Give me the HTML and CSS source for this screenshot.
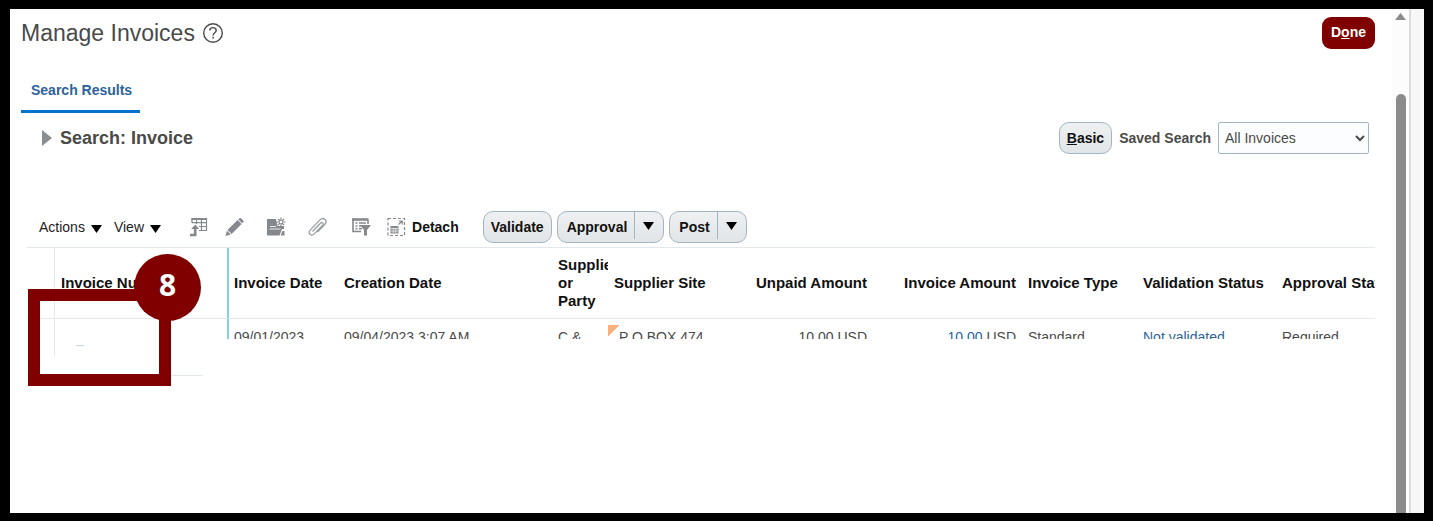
FILE: index.html
```html
<!DOCTYPE html>
<html lang="en">
<head>
<meta charset="UTF-8">
<meta name="viewport" content="width=device-width, initial-scale=1.0">
<title>Manage Invoices</title>
<link rel="stylesheet" href="styles.css">
</head>
<body>
<div class="frame">
    <main class="page">
        <header class="page-header">
            <h1>Manage Invoices</h1>
            <button type="button" class="help" aria-label="Help">
                <svg width="22" height="22" viewBox="0 0 22 22" fill="none" stroke="#4a4a4a">
                    <circle cx="11" cy="11" r="9.3" stroke-width="1.4"/>
                    <path d="M7.8 8.6c0-1.9 1.4-3 3.2-3s3.2 1.1 3.2 2.8c0 2.4-3.1 2.3-3.1 5" stroke-width="1.4"/>
                    <path d="M11.1 14.8v1.7" stroke-width="1.6"/>
                </svg>
            </button>
            <button type="button" class="done">D<u>o</u>ne</button>
        </header>

        <nav class="tabs">
            <a href="#results" class="tab">Search Results</a>
        </nav>

        <section class="search">
            <button type="button" class="expand" aria-label="Expand search">
                <svg width="10" height="16" viewBox="0 0 10 16"><path d="M0 0l10 8-10 8z" fill="#8b8f93"/></svg>
            </button>
            <h2>Search: Invoice</h2>
            <button type="button" class="btn basic"><u>B</u>asic</button>
            <label for="savedSearch">Saved Search</label>
            <select id="savedSearch" name="savedSearch">
                <option>All Invoices</option>
            </select>
        </section>

        <section class="results" id="results">
            <div class="toolbar">
                <button type="button" class="menu">Actions
                    <svg width="11" height="8" viewBox="0 0 11 8"><path d="M0 0h11L5.5 8z"/></svg>
                </button>
                <button type="button" class="menu">View
                    <svg width="11" height="8" viewBox="0 0 11 8"><path d="M0 0h11L5.5 8z"/></svg>
                </button>
                <div class="tools">
                    <button type="button" aria-label="Export">
                        <svg width="19" height="20" viewBox="0 0 19 20" fill="none" stroke="#85898d">
                            <path d="M3 6V1.5h14.5v12H10" stroke-width="1.2"/>
                            <path d="M2.5 2h15.5" stroke-width="2"/>
                            <path d="M7.5 2v5M12.5 2v11.5M3 5.7h14.5M10 9.5h7.5" stroke-width="1.2"/>
                            <path d="M1 18h5.2V11" stroke-width="2.6"/>
                            <path d="M2.2 12L6.2 7.5l4 4.5z" fill="#85898d" stroke="none"/>
                        </svg>
                    </button>
                    <button type="button" aria-label="Edit">
                        <svg width="19" height="20" viewBox="0 0 19 20" fill="#85898d">
                            <path d="M.5 19l1.4-5.3 3.9 3.9z"/>
                            <path d="M2.5 12.9L12.6 3l4 4-10 10z"/>
                            <path d="M13.3 2.4l1-1c.6-.6 1.3-.5 1.9 0l2 2c.6.6.6 1.3 0 1.9l-1 1z"/>
                        </svg>
                    </button>
                    <button type="button" aria-label="Create">
                        <svg width="19" height="20" viewBox="0 0 19 20" fill="#85898d">
                            <path d="M0 2h9l1.500 7H17v3h-2l-2.500 6.500H0z"/>
                            <path d="M13.500 18.500l2-4.500h2v4.500z"/>
                            <path d="M3 9.500h6M2.500 12h11" stroke="#fff" stroke-width=".8"/>
                            <path d="M14 .5v9M9.500 5h9M11 2l6 6M17 2l-6 6" stroke="#85898d" stroke-width="1.200"/>
                            <circle cx="14" cy="5" r="1.200" fill="#fff"/>
                        </svg>
                    </button>
                    <button type="button" aria-label="Attachments">
                        <svg width="19" height="20" viewBox="0 0 19 20" fill="none" stroke="#9a9da0" stroke-width="1.3">
                            <path d="M4.500 14.500l8-8.200c1.700-1.700 3.800.3 2.200 2l-8.400 8.600c-3 2.900-7-.7-4.200-3.800L12 2.900c3.600-3.500 8.200.8 4.900 4.500L9.500 15"/>
                        </svg>
                    </button>
                    <button type="button" aria-label="Query by example">
                        <svg width="19" height="20" viewBox="0 0 19 20" fill="none" stroke="#85898d">
                            <path d="M0 2.500h16.500" stroke-width="2.600"/>
                            <path d="M1 3v11.500h8M16 3v4" stroke-width="1.600"/>
                            <path d="M3.500 6h2M7 6h7M3.500 9h2M7 9h2M3.500 11.800h2M7 11.800h3" stroke-width="1.400"/>
                            <path d="M8 8h11l-4 5v5.500h-3V13z" fill="#85898d" stroke="none"/>
                        </svg>
                    </button>
                    <button type="button" class="detach">
                        <svg width="19" height="20" viewBox="0 0 19 20" fill="none" stroke="#85898d">
                            <path d="M1 1.500h16.500v17H1z" stroke-width="1.200" stroke-dasharray="3 2"/>
                            <path d="M3.500 9h8v7.500h-8z" fill="#85898d" stroke="none"/>
                            <path d="M4 11.500h7M4 14h7M6.300 11v5M8.800 11v5" stroke="#fff" stroke-width=".7"/>
                            <path d="M11.500 7.500l3.500-3.500M11.800 4h3.400v3.400" stroke-width="1.200"/>
                        </svg>
                        Detach
                    </button>
                </div>
                <div class="actions">
                    <button type="button" class="btn">Validate</button>
                    <div class="split">
                        <button type="button">Approval</button>
                        <button type="button" class="arrow" aria-label="Approval options">
                            <svg width="11" height="8" viewBox="0 0 11 8"><path d="M0 0h11L5.5 8z"/></svg>
                        </button>
                    </div>
                    <div class="split">
                        <button type="button">Post</button>
                        <button type="button" class="arrow" aria-label="Post options">
                            <svg width="11" height="8" viewBox="0 0 11 8"><path d="M0 0h11L5.5 8z"/></svg>
                        </button>
                    </div>
                </div>
            </div>

            <div class="grid">
                <table>
                    <colgroup>
                        <col class="w-select">
                        <col class="w-number">
                        <col class="w-date">
                        <col class="w-created">
                        <col class="w-party">
                        <col class="w-site">
                        <col class="w-amount">
                        <col class="w-amount">
                        <col class="w-type">
                        <col class="w-validation">
                        <col>
                    </colgroup>
                    <thead>
                        <tr>
                            <th class="select"></th>
                            <th>Invoice Number</th>
                            <th class="frozen">Invoice Date</th>
                            <th>Creation Date</th>
                            <th class="wrap">Supplier or Party</th>
                            <th>Supplier Site</th>
                            <th class="num">Unpaid Amount</th>
                            <th class="num">Invoice Amount</th>
                            <th>Invoice Type</th>
                            <th>Validation Status</th>
                            <th>Approval Status</th>
                        </tr>
                    </thead>
                    <tbody>
                        <tr>
                            <td class="select"></td>
                            <td class="number"><a href="#invoice">–</a></td>
                            <td><div class="cell frozen">09/01/2023</div></td>
                            <td><div class="cell">09/04/2023 3:07 AM</div></td>
                            <td><div class="cell">C &amp;</div></td>
                            <td><div class="cell flagged">P O BOX 474</div></td>
                            <td><div class="cell num">10.00 USD</div></td>
                            <td><div class="cell num"><a href="#amount">10.00</a> USD</div></td>
                            <td><div class="cell">Standard</div></td>
                            <td><div class="cell"><a href="#validation">Not validated</a></div></td>
                            <td><div class="cell">Required</div></td>
                        </tr>
                    </tbody>
                </table>
                <div class="frozen-end"></div>
                <div class="callout"></div>
                <div class="badge">8</div>
            </div>
        </section>
    </main>

    <div class="scrollbar">
        <svg width="11" height="7" viewBox="0 0 11 7"><path d="M5.5 0L11 7H0z" fill="#8b8b8b"/></svg>
        <div class="thumb"></div>
    </div>
    <div class="gutter"></div>
</div>
</body>
</html>
```

FILE: styles.css
```css
* {
    box-sizing: border-box;
}

body {
    margin: 0;
    background-color: #000;
    font-family: "Liberation Sans", Arial, sans-serif;
    font-size: 14px;
    color: #4a4a4a;
}

.frame {
    display: flex;
    min-height: 100vh;
    border: solid #000;
    border-width: 9px 9px 8px 10px;
    background-color: #fff;
}

.page {
    flex: 1;
    min-width: 0;
    padding: 8px 17px 0 11px;
}

button {
    padding: 0;
    border: none;
    background: none;
    font: inherit;
    color: inherit;
    cursor: pointer;
}

svg {
    display: block;
}

a {
    color: #2a639e;
    text-decoration: none;
}

h1, h2 {
    margin: 0;
}

.page-header {
    display: flex;
    align-items: center;
    height: 32px;
}

h1 {
    font-size: 23px;
    font-weight: normal;
}

.help {
    margin-left: 7px;
}

.done {
    height: 32px;
    margin-left: auto;
    padding: 0 9px 2px;
    border-radius: 9px;
    background-color: #800000;
    color: #fff;
    font-weight: bold;
}

.tabs {
    display: flex;
    margin-top: 24px;
}

.tab {
    padding: 8px 8px 11px 10px;
    border-bottom: 3px solid #0572ce;
    line-height: 18px;
    font-weight: bold;
}

/* search bar */
.search {
    display: flex;
    align-items: center;
    margin: 9px 6px 0 21px;
}

h2 {
    margin: 0 auto 0 8px;
    font-size: 18px;
}

.btn, .split {
    height: 32px;
    border: 1px solid #a3b4c2;
    border-radius: 10px;
    background: linear-gradient(#eef0f2, #e1e5e8);
    color: #111;
    font-weight: bold;
}

.btn {
    padding: 0 7px;
}

.search label {
    margin: 0 7px;
    font-weight: bold;
}

select {
    width: 151px;
    height: 32px;
    padding: 0 2px;
    border: 1px solid #a3b4c2;
    border-radius: 2px;
    background-color: #fcfdfe;
    font: inherit;
    color: #4a4a4a;
}

/* toolbar */
.results {
    margin: 57px 0 0 6px;
}

.toolbar {
    display: flex;
    align-items: center;
    padding: 0 0 4px 12px;
}

.menu {
    display: flex;
    align-items: center;
    gap: 6px;
    margin-right: 12px;
    color: #222;
}

.menu svg {
    margin-top: 4px;
}

.tools {
    display: grid;
    grid-template-columns: 36px 42px 41px 44px auto auto;
    margin-left: 16px;
}

.tools button {
    display: flex;
    align-items: center;
}

.tools .detach {
    gap: 6px;
    margin-left: 16px;
    color: #111;
    font-weight: bold;
}

.actions {
    display: flex;
    gap: 5px;
    margin-left: 24px;
}

.split {
    display: flex;
}

.split button {
    padding: 0 7px 0 9px;
}

.split .arrow {
    height: 27px;
    padding: 0 9px 0 8px;
    border-left: 1px solid #a3b4c2;
}

/* invoice table */
.grid {
    position: relative;
    border-top: 1px solid #e3e8ed;
}

table {
    width: 100%;
    table-layout: fixed;
    border-collapse: separate;
    border-spacing: 0;
}

.w-select { width: 28px; }
.w-number { width: 172px; }
.w-date { width: 111px; }
.w-created { width: 214px; }
.w-party { width: 56px; }
.w-site { width: 116px; }
.w-amount { width: 149px; }
.w-type { width: 115px; }
.w-validation { width: 139px; }

th {
    height: 71px;
    padding: 0 6px;
    border-bottom: 1px solid #e3e8ed;
    overflow: hidden;
    line-height: 18px;
    font-size: 15px;
    text-align: left;
    white-space: nowrap;
    color: #111;
}

.wrap {
    padding-right: 0;
    white-space: normal;
}

td {
    height: 37px;
    padding: 0;
    vertical-align: top;
}

.select {
    border-right: 1px solid #e3e8ed;
}

.number {
    padding: 17px 0 0 21px;
}

.number a {
    color: #c5d5e4;
}

.cell {
    height: 20px;
    padding: 10px 6px 0;
    overflow: hidden;
    line-height: 16px;
    white-space: nowrap;
}

.frozen {
    border-left: 2px solid #7fd4e4;
    padding-left: 5px;
}

.flagged {
    padding-left: 11px;
    background: linear-gradient(135deg, #fbb07c 8px, transparent 8px) 0 6px no-repeat;
}

.num {
    text-align: right;
}

.frozen-end {
    width: 176px;
    height: 20px;
    border-bottom: 1px solid #e3e8ed;
}

/* step marker over the first row */
.callout {
    position: absolute;
    top: 41px;
    left: 1px;
    width: 143px;
    height: 97px;
    border: 12px solid #800000;
}

.badge {
    position: absolute;
    top: 6px;
    left: 107px;
    width: 67px;
    height: 67px;
    border-radius: 50%;
    background-color: #800000;
    color: #fff;
    font: bold 30px/62px "Open Sans", sans-serif;
    text-align: center;
}

/* window scrollbar */
.scrollbar {
    display: flex;
    flex-direction: column;
    align-items: center;
    width: 17px;
    padding-top: 4px;
    background-color: #fcfcfc;
}

.thumb {
    flex: 1;
    width: 10px;
    margin-top: 74px;
    border-radius: 5px 5px 0 0;
    background-color: #8b8b8b;
}

.gutter {
    width: 15px;
    border-left: 2px solid #dcdcdc;
    background-color: #f7f7f7;
}
```
